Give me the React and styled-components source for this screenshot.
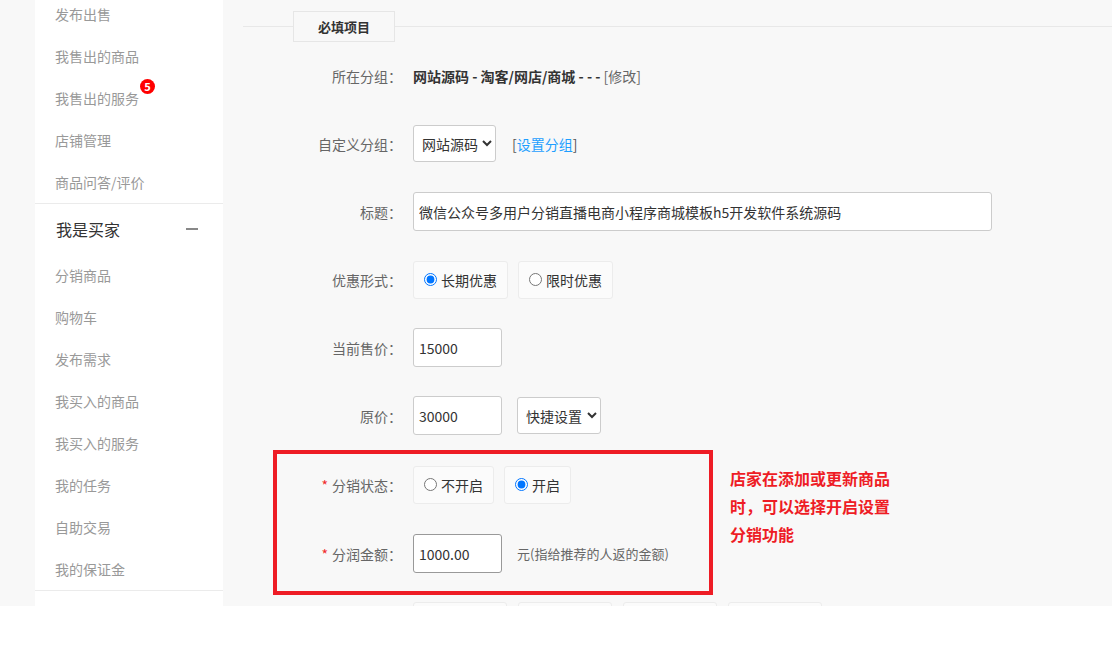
import React from "react";
import styled, { createGlobalStyle } from "styled-components";

const GlobalStyle = createGlobalStyle`
  html, body {
    margin: 0;
    padding: 0;
    background: #fff;
    font-family: "Noto Sans CJK SC", "Noto Sans", sans-serif;
  }
  * { box-sizing: border-box; }
`;

const sellerItems = [
  { name: "发布出售" },
  { name: "我售出的商品" },
  { name: "我售出的服务", badge: 5 },
  { name: "店铺管理" },
  { name: "商品问答/评价" },
];

const buyerItems = [
  "分销商品",
  "购物车",
  "发布需求",
  "我买入的商品",
  "我买入的服务",
  "我的任务",
  "自助交易",
  "我的保证金",
];

export default function App() {
  return (
    <>
      <GlobalStyle />
      <Page>
        <Sidebar>
          <MenuList>
            {sellerItems.map((it) => (
              <MenuItem key={it.name}>
                <ItemText>
                  {it.name}
                  {it.badge && <Badge>{it.badge}</Badge>}
                </ItemText>
              </MenuItem>
            ))}
          </MenuList>
          <GroupHead>
            我是买家
            <Minus />
          </GroupHead>
          <MenuList>
            {buyerItems.map((name) => (
              <MenuItem key={name}>
                <ItemText>{name}</ItemText>
              </MenuItem>
            ))}
          </MenuList>
        </Sidebar>

        <Main>
          <Legend>
            <LegendLine $w="50px" />
            <LegendBox>必填项目</LegendBox>
            <LegendLine />
          </Legend>

          <Row $first>
            <Label>所在分组：</Label>
            <Value>
              <b>网站源码 - 淘客/网店/商城 - - -</b> [修改]
            </Value>
          </Row>

          <Row>
            <Label>自定义分组：</Label>
            <Select $w="83px">
              <option>网站源码</option>
            </Select>
            <LinkText>
              [<span>设置分组</span>]
            </LinkText>
          </Row>

          <Row>
            <Label>标题：</Label>
            <TextInput
              $w="579px"
              readOnly
              value="微信公众号多用户分销直播电商小程序商城模板h5开发软件系统源码"
            />
          </Row>

          <Row>
            <Label>优惠形式：</Label>
            <RadioBox $w="95px">
              <input type="radio" name="youhui" defaultChecked />
              长期优惠
            </RadioBox>
            <RadioBox $w="95px">
              <input type="radio" name="youhui" />
              限时优惠
            </RadioBox>
          </Row>

          <Row>
            <Label>当前售价：</Label>
            <TextInput $w="89px" readOnly value="15000" />
          </Row>

          <Row>
            <Label>原价：</Label>
            <TextInput $w="89px" readOnly value="30000" />
            <Select $w="84px" $gap="15px">
              <option>快捷设置</option>
            </Select>
          </Row>

          <Highlight>
            <Frame>
              <Row $inner>
                <Label $narrow>
                  <Star>*</Star>分销状态：
                </Label>
                <RadioBox $w="81px">
                  <input type="radio" name="fenxiao" />
                  不开启
                </RadioBox>
                <RadioBox $w="67px" $gap="10px">
                  <input type="radio" name="fenxiao" defaultChecked />
                  开启
                </RadioBox>
              </Row>
              <Row $inner $last>
                <Label $narrow>
                  <Star>*</Star>分润金额：
                </Label>
                <TextInput $w="89px" $focus readOnly value="1000.00" />
                <Hint>元(指给推荐的人返的金额)</Hint>
              </Row>
            </Frame>
            <Note>店家在添加或更新商品时，可以选择开启设置分销功能</Note>
          </Highlight>

          <BottomRow>
            <GhostBox />
            <GhostBox />
            <GhostBox />
            <GhostBox />
          </BottomRow>
        </Main>
      </Page>
    </>
  );
}

const Page = styled.div`
  display: flex;
  height: 606px;
  overflow: hidden;
  background: #f8f8f8;
  padding-left: 35px;
`;

const Sidebar = styled.div`
  width: 188px;
  flex-shrink: 0;
  background: #fff;
  margin-right: 20px;
`;

const MenuList = styled.div`
  border-bottom: 1px solid #ebebeb;
  &:first-child {
    margin-top: -7px;
  }
`;

const MenuItem = styled.div`
  height: 42px;
  display: flex;
  align-items: center;
  padding-left: 20px;
  font-size: 14px;
  color: #999;
`;

const ItemText = styled.span`
  position: relative;
`;

const Badge = styled.span`
  position: absolute;
  left: calc(100% + 1px);
  top: -9px;
  width: 15px;
  height: 15px;
  border-radius: 50%;
  background: #f00;
  color: #fff;
  font-size: 11px;
  font-weight: bold;
  line-height: 15px;
  text-align: center;
`;

const GroupHead = styled.div`
  height: 50px;
  display: flex;
  align-items: center;
  justify-content: space-between;
  padding: 0 25px 0 21px;
  font-size: 16px;
  color: #333;
`;

const Minus = styled.span`
  width: 12px;
  height: 2px;
  background: #888;
`;

const Main = styled.div`
  flex: 1;
  padding-top: 11px;
`;

const Legend = styled.div`
  display: flex;
  align-items: center;
`;

const LegendLine = styled.div`
  height: 1px;
  background: #e8e8e8;
  ${(p) => (p.$w ? `width: ${p.$w};` : "flex: 1;")}
`;

const LegendBox = styled.div`
  width: 102px;
  height: 31px;
  border: 1px solid #e6e6e6;
  display: flex;
  align-items: center;
  justify-content: center;
  font-size: 13px;
  font-weight: bold;
  color: #333;
`;

const Row = styled.div`
  display: flex;
  align-items: center;
  height: 39px;
  margin-top: ${(p) => (p.$first ? "14px" : p.$inner ? "0" : "29px")};
  margin-bottom: ${(p) => (p.$inner && !p.$last ? "30px" : "0")};
`;

const Label = styled.div`
  width: ${(p) => (p.$narrow ? "125px" : "159px")};
  flex-shrink: 0;
  margin-right: 11px;
  text-align: right;
  font-size: 14px;
  color: #666;
  white-space: nowrap;
`;

const Star = styled.span`
  color: #f02a2a;
  margin-right: 4px;
`;

const Value = styled.div`
  font-size: 14px;
  color: #666;
  b {
    color: #333;
  }
`;

const Select = styled.select`
  width: ${(p) => p.$w};
  height: 37px;
  margin-left: ${(p) => p.$gap || "0"};
  border: 1px solid #ccc;
  border-radius: 3px;
  background: #fff;
  padding: 0 0 0 4px;
  font-family: inherit;
  font-size: 14px;
  color: #333;
`;

const LinkText = styled.span`
  margin-left: 16px;
  font-size: 14px;
  color: #555;
  span {
    color: #1e9fff;
  }
`;

const TextInput = styled.input`
  width: ${(p) => p.$w};
  height: 39px;
  border: 1px solid ${(p) => (p.$focus ? "#999" : "#ccc")};
  border-radius: 3px;
  background: #fff;
  padding: 0 5px;
  font-family: inherit;
  font-size: 14px;
  color: #333;
  outline: none;
`;

const RadioBox = styled.label`
  width: ${(p) => p.$w};
  height: 38px;
  margin-right: ${(p) => (p.$gap ? "0" : "10px")};
  display: flex;
  align-items: center;
  padding-left: 10px;
  border: 1px solid #ececec;
  border-radius: 3px;
  background: #fbfbfb;
  font-size: 14px;
  color: #333;
  input {
    margin: 0 4px 0 0;
    width: 13px;
    height: 13px;
  }
`;

const Hint = styled.span`
  margin-left: 15px;
  font-size: 13px;
  color: #666;
`;

const Highlight = styled.div`
  display: flex;
  align-items: flex-start;
  margin-top: 15px;
  margin-left: 30px;
`;

const Frame = styled.div`
  width: 440px;
  border: 4px solid #ee1c25;
  padding: 11px 0 18px;
`;

const Note = styled.div`
  width: 165px;
  margin: 14px 0 0 17px;
  font-size: 16px;
  font-weight: bold;
  line-height: 28px;
  color: #ee1c25;
`;

const BottomRow = styled.div`
  display: flex;
  gap: 11px;
  margin: 7px 0 0 170px;
`;

const GhostBox = styled.div`
  width: 94px;
  height: 38px;
  border: 1px solid #ececec;
  border-radius: 3px;
  background: #fbfbfb;
`;
